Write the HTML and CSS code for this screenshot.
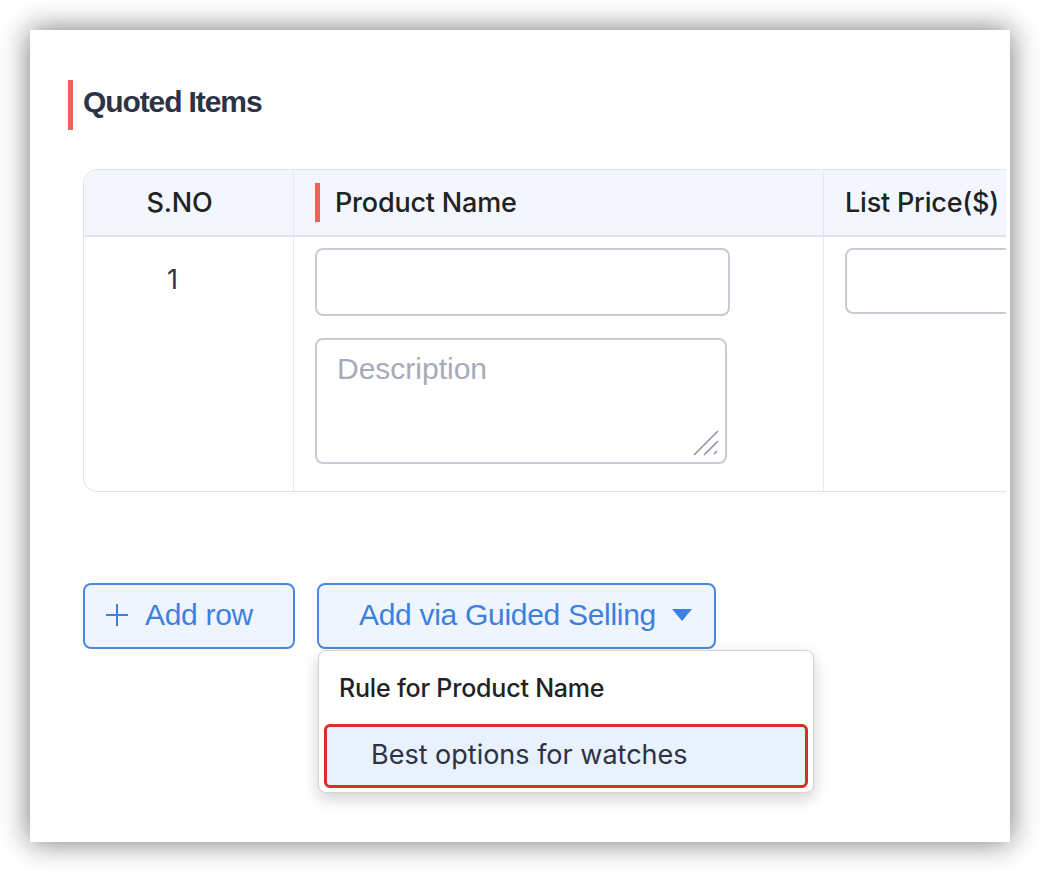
FILE: index.html
```html
<!DOCTYPE html>
<html lang="en">
<head>
    <meta charset="UTF-8">
    <title>Quoted Items</title>
    <link rel="stylesheet" href="styles.css">
</head>
<body>
    <div class="card">
        <h2 class="section-title">Quoted Items</h2>

        <div class="table-clip">
            <div class="items-table">
                <div class="row head">
                    <div class="cell col-sno">S.NO</div>
                    <div class="cell col-name"><span class="mandatory">Product Name</span></div>
                    <div class="cell col-price">List Price($)</div>
                </div>
                <div class="row body">
                    <div class="cell col-sno">1</div>
                    <div class="cell col-name">
                        <div class="input"></div>
                        <div class="textarea">
                            <span class="placeholder">Description</span>
                            <svg class="grip" width="26" height="26" viewBox="0 0 26 26">
                                <path d="M1 25 L25 1 M11 25 L25 11 M21 24 L24 21" stroke="#8f949c" stroke-width="1.6"/>
                            </svg>
                        </div>
                    </div>
                    <div class="cell col-price">
                        <div class="input short"></div>
                    </div>
                </div>
            </div>
        </div>

        <div class="actions">
            <button class="btn">
                <svg width="24" height="24" viewBox="0 0 24 24">
                    <path d="M12 1 V23 M1 12 H23" stroke="#3d80e0" stroke-width="2"/>
                </svg>
                Add row
            </button>
            <div class="guided">
                <button class="btn wide">
                    Add via Guided Selling
                    <svg width="20" height="12" viewBox="0 0 20 12">
                        <path d="M0 0 H20 L10 12 Z" fill="#3d80e0"/>
                    </svg>
                </button>
                <div class="menu">
                    <div class="menu-head">Rule for Product Name</div>
                    <div class="menu-item">Best options for watches</div>
                </div>
            </div>
        </div>
    </div>
</body>
</html>
```

FILE: styles.css
```css
body {
    margin: 0;
    padding: 30px;
    background-color: white;
    font-family: Inter, "Liberation Sans", sans-serif;
}

.card {
    width: 980px;
    height: 812px;
    box-sizing: border-box;
    background-color: white;
    box-shadow: 0 0 28px rgba(0, 0, 0, 0.55);
    padding: 50px 4px 0 53px;
}

.section-title {
    margin: 0 0 39px -15px;
    height: 50px;
    box-sizing: border-box;
    padding-bottom: 6px;
    border-left: 5px solid #e8645a;
    padding-left: 10px;
    display: flex;
    align-items: center;
    font-family: "Liberation Sans", sans-serif;
    font-size: 30px;
    letter-spacing: -1.1px;
    font-weight: bold;
    color: #2c3344;
}

.table-clip {
    overflow: hidden;
}

.items-table {
    width: 1100px;
    border: 1px solid #dde4ee;
    border-radius: 14px;
}

.row {
    display: flex;
}

.row.head {
    height: 65px;
    background-color: #f3f7fd;
    border-bottom: 2px solid #dde4ee;
    border-radius: 14px 0 0 0;
    font-size: 27px;
    font-weight: 500;
    letter-spacing: -0.2px;
    color: #222;
}

.row.head .cell {
    display: flex;
    align-items: center;
}

.cell {
    flex-shrink: 0;
    box-sizing: border-box;
    border-right: 1px solid #e4e9f0;
}

.col-sno {
    width: 210px;
    justify-content: center;
    text-align: center;
    padding-right: 18px;
}

.col-name {
    width: 530px;
    padding-left: 21px;
}

.col-price {
    flex: 1;
    padding-left: 21px;
    border-right: none;
}

.mandatory {
    border-left: 5px solid #e8645a;
    padding-left: 15px;
    line-height: 39px;
}

.row.body {
    height: 254px;
}

.row.body .col-sno {
    padding-top: 26px;
    padding-right: 32px;
    font-size: 27px;
    color: #2c3344;
}

.row.body .col-name,
.row.body .col-price {
    padding-top: 11px;
}

.input {
    width: 415px;
    height: 68px;
    box-sizing: border-box;
    border: 2px solid #c8ccd2;
    border-radius: 8px;
    background: white;
}

.input.short {
    width: 300px;
    height: 66px;
}

.textarea {
    position: relative;
    margin-top: 22px;
    width: 412px;
    height: 126px;
    box-sizing: border-box;
    border: 2px solid #c8ccd2;
    border-radius: 8px;
    padding: 12px 20px;
}

.placeholder {
    font-family: "Liberation Sans", sans-serif;
    font-size: 30px;
    color: #a6abb8;
}

.grip {
    position: absolute;
    right: 6px;
    bottom: 6px;
}

.actions {
    display: flex;
    gap: 22px;
    margin-top: 91px;
}

.btn {
    height: 66px;
    width: 212px;
    box-sizing: border-box;
    border: 2px solid #4a89e0;
    border-radius: 8px;
    background-color: #eef5fe;
    color: #3d80e0;
    font-family: "Liberation Sans", sans-serif;
    font-size: 30px;
    letter-spacing: -0.3px;
    display: flex;
    align-items: center;
    gap: 16px;
    padding: 0 20px 2px;
    cursor: pointer;
}

.btn.wide {
    width: 399px;
    padding-left: 40px;
}

.guided {
    position: relative;
}

.menu {
    position: absolute;
    top: 67px;
    left: 1px;
    width: 496px;
    height: 143px;
    box-sizing: border-box;
    background: white;
    border: 1px solid #d3d3d3;
    border-radius: 8px;
    box-shadow: 0 6px 16px rgba(0, 0, 0, 0.18);
    padding: 0 5px;
}

.menu-head {
    height: 73px;
    display: flex;
    align-items: center;
    padding-left: 15px;
    font-size: 25px;
    font-weight: 500;
    letter-spacing: -0.2px;
    color: #222;
}

.menu-item {
    height: 64px;
    box-sizing: border-box;
    border: 3px solid #d83020;
    border-radius: 6px;
    background-color: #e8f1fc;
    display: flex;
    align-items: center;
    padding: 0 0 4px 44px;
    font-size: 27px;
    color: #2c3344;
}
```
